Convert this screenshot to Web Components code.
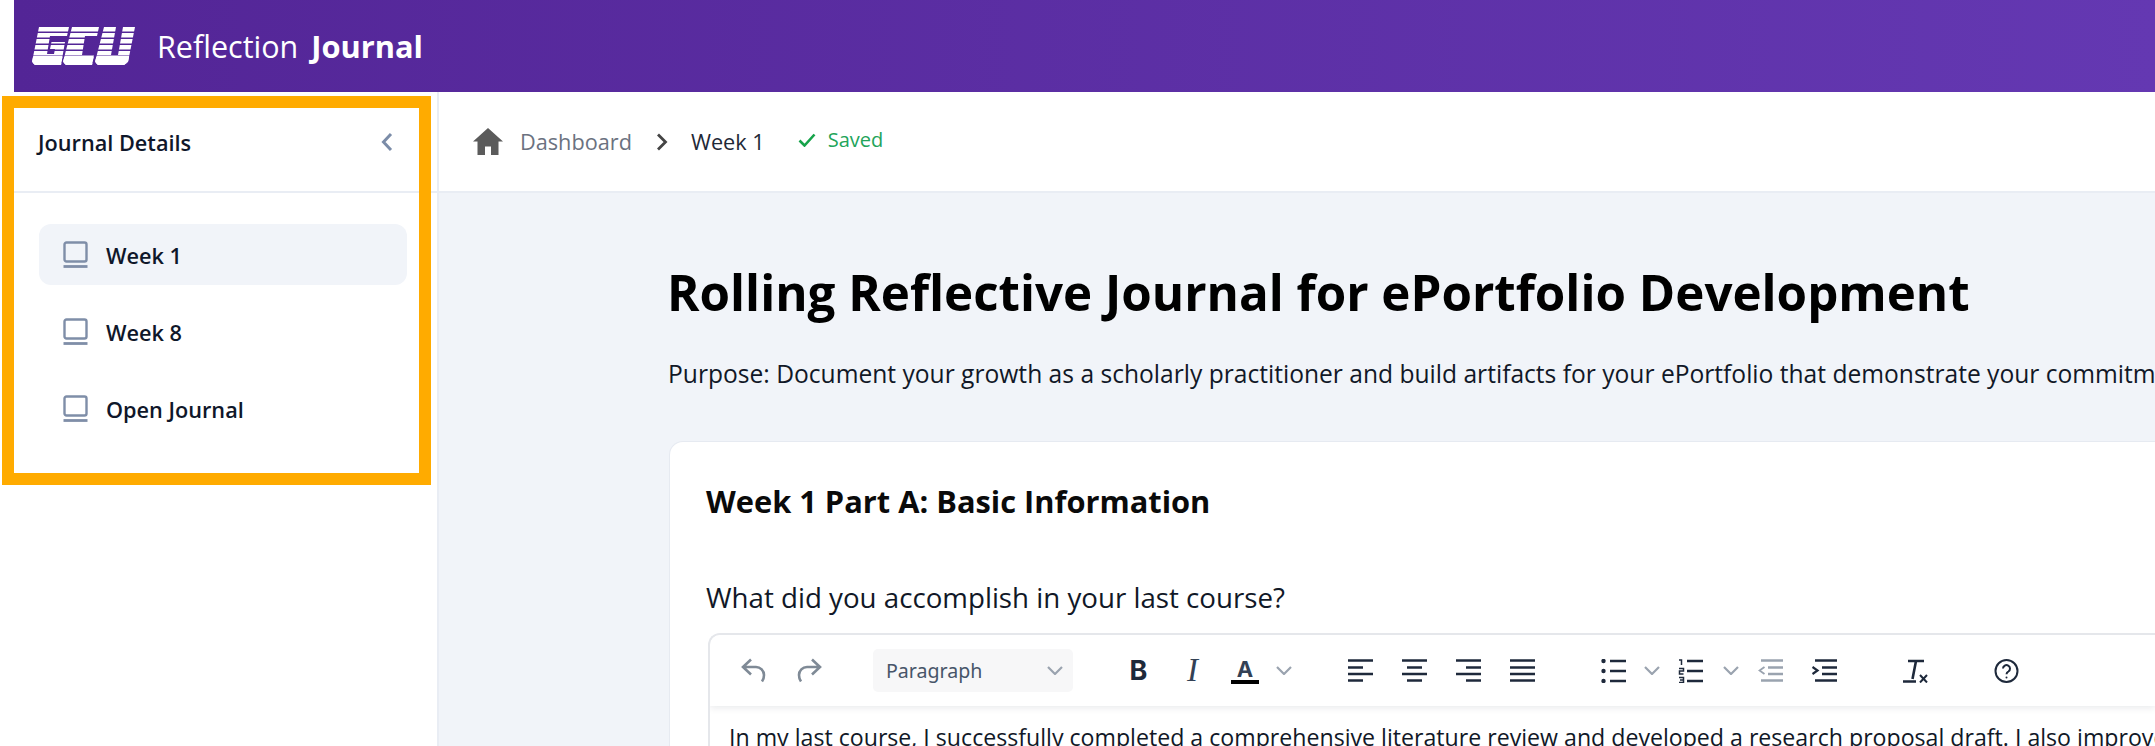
<!DOCTYPE html>
<html>
<head>
<meta charset="utf-8">
<style>
  html, body { margin: 0; height: 100%; overflow: hidden; background: #fff; }
  body { font-family: "Open Sans", "Noto Sans", sans-serif; color: #0f172a; }
</style>
</head>
<body>
<journal-app></journal-app>

<script>
const brand = document.createElement('template');
brand.innerHTML = `
  <style>
    :host {
      display: flex;
      align-items: center;
      height: 92px;
      margin-left: 14px;
      padding-left: 18px;
      background: linear-gradient(90deg, #532596 0%, #6438b2 100%);
      color: #fff;
    }
    svg { display: block; width: 104px; height: 38px; margin-right: 21px; }
    .light { font-size: 30.500px; margin-right: 13px; }
    .heavy { font-size: 30.800px; font-weight: 700; }
  </style>
  <svg viewBox="0 0 104 38" aria-hidden="true">
    <defs>
      <pattern id="stripes" width="6" height="6" patternUnits="userSpaceOnUse">
        <rect width="6" height="4.500" fill="#fff"/>
      </pattern>
      <clipPath id="foot"><rect y="29" width="104" height="9"/></clipPath>
      <path id="letters" d="M7 0H37L35 9H18L15 27H22L23 22H18L19.500 15H33L29 38H3L0 35Z
        M40 0H67L65 9H53L50 28H62L60 38H34L31 35Z
        M72 0H84L79 28H86L91 0H103L96 35 92 38H66L63 35Z"/>
    </defs>
    <use href="#letters" fill="url(#stripes)"/>
    <use href="#letters" fill="#fff" clip-path="url(#foot)"/>
  </svg>
  <span class="light"><slot name="light"></slot></span>
  <span class="heavy"><slot name="heavy"></slot></span>
`;
class BrandBar extends HTMLElement {
  constructor() {
    super();
    this.attachShadow({ mode: 'open' }).appendChild(brand.content.cloneNode(true));
  }
}
customElements.define('brand-bar', BrandBar);

const sideItem = document.createElement('template');
sideItem.innerHTML = `
  <style>
    :host {
      display: flex;
      align-items: center;
      gap: 18px;
      height: 61px;
      padding-left: 24px;
      border-radius: 12px;
      font-size: 21.700px;
      font-weight: 600;
      color: #0f172a;
    }
    :host([active]) { background: #f1f4f9; }
    svg { width: 25px; height: 28px; display: block; fill: none; stroke: #7f8ea8; stroke-width: 2.400; }
    span { padding-top: 2px; }
  </style>
  <svg viewBox="0 0 25 28">
    <rect x="1.500" y="1.500" width="22" height="19" rx="2"/>
    <path d="M0.500 25.500h24" stroke-width="2.800"/>
  </svg>
  <span><slot></slot></span>
`;
class SideItem extends HTMLElement {
  constructor() {
    super();
    this.attachShadow({ mode: 'open' }).appendChild(sideItem.content.cloneNode(true));
  }
}
customElements.define('side-item', SideItem);

const sidebar = document.createElement('template');
sidebar.innerHTML = `
  <style>
    :host {
      display: flex;
      flex-direction: column;
      flex: none;
      width: 423px;
      border-right: 2px solid #e9edf4;
      background: #fff;
    }
    header {
      display: flex;
      align-items: center;
      justify-content: space-between;
      height: 101px;
      box-sizing: border-box;
      padding: 0 44px 0 24px;
      border-bottom: 2px solid #e9edf4;
      font-size: 21.700px;
      font-weight: 600;
    }
    span { padding-top: 2px; }
    svg { width: 12px; height: 20px; fill: none; stroke: #7b8ca8; stroke-width: 3; }
    nav { display: flex; flex-direction: column; gap: 16px; padding: 31px 30px 0 25px; }
  </style>
  <header>
    <span><slot name="title"></slot></span>
    <svg viewBox="0 0 12 20"><path d="M10 2 2.500 10l7.500 8"/></svg>
  </header>
  <nav><slot></slot></nav>
`;
class JournalSidebar extends HTMLElement {
  constructor() {
    super();
    this.attachShadow({ mode: 'open' }).appendChild(sidebar.content.cloneNode(true));
  }
}
customElements.define('journal-sidebar', JournalSidebar);

const crumbs = document.createElement('template');
crumbs.innerHTML = `
  <style>
    :host {
      display: flex;
      align-items: center;
      flex: none;
      height: 101px;
      box-sizing: border-box;
      padding-left: 34px;
      background: #fff;
      border-bottom: 2px solid #e9edf4;
      font-size: 21.700px;
    }
    .home { width: 30px; height: 27px; fill: #5b5b5b; margin-right: 17px; }
    .dash { color: #6b7280; }
    .sep { width: 12px; height: 18px; margin: 0 23px 0 24px; fill: none; stroke: #444; stroke-width: 2.800; }
    .now { color: #1f2937; }
    .saved { display: flex; align-items: center; gap: 12px; margin-left: 33px; color: #22a45a; font-size: 20px; margin-bottom: 4px; }
    .saved svg { width: 18px; height: 14px; fill: none; stroke: #16a34a; stroke-width: 2.600; }
  </style>
  <svg class="home" viewBox="0 0 30 27"><path d="M15 0 0 13.500h4.500V27h7.500v-8.500h6V27h7.500V13.500H30z"/></svg>
  <span class="dash">Dashboard</span>
  <svg class="sep" viewBox="0 0 12 18"><path d="M2 1.500 9.500 9 2 16.500"/></svg>
  <span class="now">Week 1</span>
  <span class="saved">
    <svg viewBox="0 0 18 14"><path d="M1.500 7.500l5 5L16.500 1.500"/></svg>
    Saved
  </span>
`;
class BreadCrumbs extends HTMLElement {
  constructor() {
    super();
    this.attachShadow({ mode: 'open' }).appendChild(crumbs.content.cloneNode(true));
  }
}
customElements.define('bread-crumbs', BreadCrumbs);

const rowY = [1.5, 8.5, 15, 21.5];

function bars(spans) {
  return spans.map(([x1, x2], i) => `<line x1="${x1}" x2="${x2}" y1="${rowY[i]}" y2="${rowY[i]}"/>`).join('');
}

function barIcon(spans, extra = '', color = '#1e293b') {
  return `<svg class="ic" viewBox="0 0 25 24" stroke="${color}" stroke-width="2.600">${bars(spans)}${extra}</svg>`;
}

const chevron = '<svg class="chev" viewBox="0 0 16 9"><path d="M1 1l7 7 7-7"/></svg>';

function gap(w) {
  return `<span class="gap" style="width:${w}px"></span>`;
}

const toolbar = document.createElement('template');
toolbar.innerHTML = `
  <style>
    :host {
      display: flex;
      align-items: center;
      flex: none;
      height: 71px;
      box-sizing: border-box;
      padding-left: 31px;
      background: #fff;
      box-shadow: 0 2px 7px rgba(15, 23, 42, .09);
      position: relative;
      color: #1e293b;
    }
    svg { display: block; flex: none; }
    .gap { flex: none; }
    .ic { width: 25px; height: 24px; fill: none; }
    .hist { width: 25px; height: 25px; stroke: #7f8a96; stroke-width: 2.600; fill: none; }
    .chev { width: 16px; height: 9px; fill: none; stroke: #9aa3af; stroke-width: 2.200; }
    .select {
      display: flex;
      align-items: center;
      justify-content: space-between;
      flex: none;
      width: 200px;
      height: 43px;
      box-sizing: border-box;
      padding: 0 10px 0 13px;
      background: #f7f7f8;
      border-radius: 5px;
      font: 19.600px "Noto Sans", sans-serif;
      color: #475569;
    }
    .bold { flex: none; width: 19px; display: flex; justify-content: center; font: 700 27px "Inter", sans-serif; color: #1e293b; }
    .ital { flex: none; width: 17px; display: flex; justify-content: center; font: italic 33px "Liberation Serif", serif; color: #334155; }
    .text-a { flex: none; width: 28px; display: flex; flex-direction: column; align-items: center; font: 700 22px/22px "Inter", sans-serif; color: #334155; }
    .text-a i { display: block; width: 28px; height: 4px; background: #000; }
  </style>
  <svg class="hist" viewBox="0 0 25 25"><path d="M10 1.500 2 9l8 7.500M2.500 9H15a8 8 0 0 1 8 8c0 2.800-.7 4.800-2 6.500"/></svg>
  ${gap(31)}
  <svg class="hist" viewBox="0 0 25 25"><path d="M15 1.500 23 9l-8 7.500M22.500 9H10a8 8 0 0 0-8 8c0 2.800.7 4.800 2 6.500"/></svg>
  ${gap(51)}
  <span class="select">Paragraph ${chevron}</span>
  ${gap(56)}
  <span class="bold">B</span>
  ${gap(36)}
  <span class="ital">I</span>
  ${gap(30)}
  <span class="text-a">A<i></i></span>
  ${gap(17)}
  ${chevron}
  ${gap(56)}
  ${barIcon([[0, 25], [0, 15], [0, 25], [0, 15]])}
  ${gap(29)}
  ${barIcon([[0, 25], [5, 20], [0, 25], [5, 20]])}
  ${gap(29)}
  ${barIcon([[0, 25], [10, 25], [0, 25], [10, 25]])}
  ${gap(29)}
  ${barIcon([[0, 25], [0, 25], [0, 25], [0, 25]])}
  ${gap(66)}
  <svg class="ic" viewBox="0 0 25 24" stroke="#1e293b" stroke-width="2.600">
    <path d="M9 2h16M9 12h16M9 22h16"/>
    <g fill="#1e293b" stroke="none"><circle cx="2.500" cy="2" r="2.200"/><circle cx="2.500" cy="12" r="2.200"/><circle cx="2.500" cy="22" r="2.200"/></g>
  </svg>
  ${gap(18)}
  ${chevron}
  ${gap(18)}
  <svg class="ic" viewBox="0 0 25 24" stroke="#1e293b" stroke-width="2.600">
    <path d="M9 2h16M9 12h16M9 22h16"/>
    <path d="M1 1h2.500v5M1 9.500h4.500v2.500H1.500V15h4M1 18.500h4.500v5H1M2 21h3.500" stroke-width="1.500"/>
  </svg>
  ${gap(20)}
  ${chevron}
  ${gap(19)}
  ${barIcon([[3, 25], [10, 25], [10, 25], [3, 25]], '<path d="M6.500 8 1.500 11.500l5 3.500" stroke-width="1.800"/>', '#9aa3af')}
  ${gap(29)}
  ${barIcon([[3, 25], [10, 25], [10, 25], [3, 25]], '<path d="M0.500 8l5 3.500-5 3.500" stroke-width="2.200"/>')}
  ${gap(66)}
  <svg class="ic" viewBox="0 0 25 24" stroke="#1e293b" stroke-width="2.600">
    <path d="M5 2h16M13 2 9.500 20M0 22.500h13"/>
    <path d="M17 16l7 7.500M24 16l-7 7.500" stroke-width="2"/>
  </svg>
  ${gap(66)}
  <svg class="ic" viewBox="0 0 25 24" stroke="#1e293b" stroke-width="2">
    <circle cx="12.500" cy="12" r="11"/>
    <path d="M9 9.500a3.500 3.500 0 1 1 5.400 3c-1.300.8-1.900 1.400-1.900 2.700"/>
    <circle cx="12.500" cy="18.500" r="1" fill="#1e293b" stroke="none"/>
  </svg>
`;
class EditorToolbar extends HTMLElement {
  constructor() {
    super();
    this.attachShadow({ mode: 'open' }).appendChild(toolbar.content.cloneNode(true));
  }
}
customElements.define('editor-toolbar', EditorToolbar);

const card = document.createElement('template');
card.innerHTML = `
  <style>
    :host {
      display: block;
      margin: 50px 0 0 1px;
      padding: 38px 0 0 36px;
      background: #fff;
      border: 1px solid #e6eaf1;
      border-right: 0;
      border-bottom: 0;
      border-radius: 14px 0 0 0;
      height: 400px;
    }
    h2 { margin: 0; font-size: 30.800px; line-height: 42px; font-weight: 700; color: #0a0a0a; white-space: nowrap; }
    .q { margin: 58px 0 0; font-size: 27.700px; line-height: 34px; color: #111827; white-space: nowrap; }
    .editor {
      display: flex;
      flex-direction: column;
      height: 200px;
      margin: 19px 0 0 2px;
      border: 2px solid #e5e7eb;
      border-right: 0;
      border-radius: 12px 0 0 0;
      overflow: hidden;
    }
    .body { padding: 15px 19px; font-size: 23.150px; line-height: 32px; color: #111827; white-space: nowrap; }
  </style>
  <h2>Week 1 Part A: Basic Information</h2>
  <p class="q">What did you accomplish in your last course?</p>
  <div class="editor">
    <editor-toolbar></editor-toolbar>
    <div class="body"><slot></slot></div>
  </div>
`;
class JournalCard extends HTMLElement {
  constructor() {
    super();
    this.attachShadow({ mode: 'open' }).appendChild(card.content.cloneNode(true));
  }
}
customElements.define('journal-card', JournalCard);

const app = document.createElement('template');
app.innerHTML = `
  <style>
    :host { display: flex; flex-direction: column; width: 2155px; height: 746px; overflow: hidden; position: relative; }
    .row { display: flex; flex: 1; min-height: 0; margin-left: 14px; }
    .main { flex: 1; min-width: 0; display: flex; flex-direction: column; background: #f1f4f9; overflow: hidden; }
    .content { padding: 65px 0 0 229px; color: #0a0a0a; }
    h1 { margin: 0 0 0 -1px; font-size: 49.300px; line-height: 68px; font-weight: 700; white-space: nowrap; color: #000; }
    .purpose { margin: 31px 0 0; font-size: 24.600px; line-height: 34px; white-space: nowrap; color: #111827; }
    .outline { position: absolute; left: 2px; top: 96px; width: 429px; height: 389px; box-sizing: border-box; border: 12px solid #ffab00; pointer-events: none; }
  </style>
  <brand-bar><span slot="light">Reflection</span><span slot="heavy">Journal</span></brand-bar>
  <div class="row">
    <journal-sidebar>
      <span slot="title">Journal Details</span>
      <side-item active>Week 1</side-item>
      <side-item>Week 8</side-item>
      <side-item>Open Journal</side-item>
    </journal-sidebar>
    <div class="main">
      <bread-crumbs></bread-crumbs>
      <div class="content">
        <h1>Rolling Reflective Journal for ePortfolio Development</h1>
        <p class="purpose">Purpose: Document your growth as a scholarly practitioner and build artifacts for your ePortfolio that demonstrate your commitment to learning</p>
        <journal-card>In my last course, I successfully completed a comprehensive literature review and developed a research proposal draft. I also improved my writing</journal-card>
      </div>
    </div>
  </div>
  <div class="outline"></div>
`;
class JournalApp extends HTMLElement {
  constructor() {
    super();
    this.attachShadow({ mode: 'open' }).appendChild(app.content.cloneNode(true));
  }
}
customElements.define('journal-app', JournalApp);
</script>
</body>
</html>
